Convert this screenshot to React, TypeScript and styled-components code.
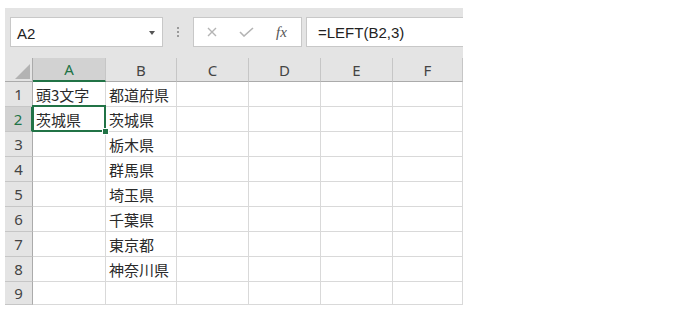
import { Fragment } from "react";
import styled, { createGlobalStyle } from "styled-components";

const GlobalStyle = createGlobalStyle`
  body {
    margin: 0;
    background: #ffffff;
    font-family: "Liberation Sans", Arial, sans-serif;
  }
`;

const Sheet = styled.div`
  margin: 8px 0 0 5px;
  width: 458px;
  background: #e4e4e4;
`;

const FormulaBar = styled.div`
  display: flex;
  align-items: stretch;
  height: 30px;
  padding: 9px 0 11px 5px;
`;

const NameBox = styled.div`
  box-sizing: border-box;
  width: 153px;
  display: flex;
  align-items: center;
  justify-content: space-between;
  padding: 2px 7px 0 6px;
  background: #fff;
  border: 1px solid #c8c8c8;
  font-size: 15px;
  color: #222;
`;

const DropArrow = styled.span`
  width: 0;
  height: 0;
  border-left: 3px solid transparent;
  border-right: 3px solid transparent;
  border-top: 4px solid #555;
`;

const Grip = styled.div`
  width: 30px;
  display: flex;
  flex-direction: column;
  align-items: center;
  justify-content: center;
  gap: 2px;

  span {
    width: 2px;
    height: 2px;
    background: #9a9a9a;
  }
`;

const IconBox = styled.div`
  box-sizing: border-box;
  width: 109px;
  margin-right: 4px;
  display: flex;
  align-items: center;
  padding-left: 13px;
  gap: 22px;
  background: #fff;
  border: 1px solid #c8c8c8;
`;

const Fx = styled.span`
  font-family: "Liberation Serif", serif;
  font-style: italic;
  font-size: 15px;
  color: #555;
`;

const FormulaInput = styled.div`
  box-sizing: border-box;
  flex: 1;
  display: flex;
  align-items: center;
  padding: 1px 0 0 11px;
  background: #fff;
  border: 1px solid #c8c8c8;
  border-right: none;
  font-size: 15px;
  color: #222;
`;

const Grid = styled.div`
  display: grid;
  grid-template-columns: 28px 73px 71px 72px 72px 72px 70px;
  grid-template-rows: 24px repeat(8, 25px) 23px;
  background: #fff;
`;

const Corner = styled.div`
  box-sizing: border-box;
  display: flex;
  align-items: flex-end;
  justify-content: flex-end;
  padding: 0 2px 2px 0;
  background: #e4e4e4;
  border-right: 1px solid #ababab;
  border-bottom: 1px solid #ababab;
`;

const ColHeader = styled.div<{ $active?: boolean }>`
  box-sizing: border-box;
  display: flex;
  align-items: center;
  justify-content: center;
  font-family: "Noto Sans", "Liberation Sans", sans-serif;
  font-size: 15px;
  color: ${(p) => (p.$active ? "#217346" : "#444")};
  background: ${(p) => (p.$active ? "#d2d2d2" : "#e4e4e4")};
  border-right: 1px solid #c6c6c6;
  border-bottom: ${(p) => (p.$active ? "2px solid #217346" : "1px solid #ababab")};
`;

const RowHeader = styled.div<{ $active?: boolean }>`
  box-sizing: border-box;
  display: flex;
  align-items: center;
  justify-content: center;
  font-family: "Noto Sans", "Liberation Sans", sans-serif;
  font-size: 15px;
  color: ${(p) => (p.$active ? "#217346" : "#444")};
  background: ${(p) => (p.$active ? "#d2d2d2" : "#e4e4e4")};
  border-bottom: 1px solid #c6c6c6;
  border-right: ${(p) => (p.$active ? "2px solid #217346" : "1px solid #ababab")};
`;

const Cell = styled.div<{ $selected?: boolean }>`
  position: relative;
  box-sizing: border-box;
  display: flex;
  align-items: center;
  padding: 0 0 0 3px;
  font-family: "Noto Sans CJK JP", "Noto Sans", sans-serif;
  font-size: 15px;
  color: #2a2a2a;
  white-space: nowrap;
  border-right: 1px solid #d9d9d9;
  border-bottom: 1px solid #d9d9d9;

  ${(p) =>
    p.$selected &&
    `
    &::before {
      content: "";
      position: absolute;
      top: -2px;
      left: -1px;
      right: -1px;
      bottom: -1px;
      border: 2px solid #217346;
      z-index: 1;
    }
    &::after {
      content: "";
      position: absolute;
      right: -4px;
      bottom: -4px;
      width: 5px;
      height: 5px;
      background: #217346;
      border: 1px solid #fff;
      z-index: 2;
    }
  `}
`;

const columns = ["A", "B", "C", "D", "E", "F"];

const data: string[][] = [
  ["頭3文字", "都道府県"],
  ["茨城県", "茨城県"],
  ["", "栃木県"],
  ["", "群馬県"],
  ["", "埼玉県"],
  ["", "千葉県"],
  ["", "東京都"],
  ["", "神奈川県"],
  ["", ""],
];

function App() {
  return (
    <>
      <GlobalStyle />
      <Sheet>
        <FormulaBar>
          <NameBox>
            A2
            <DropArrow />
          </NameBox>
          <Grip>
            <span />
            <span />
            <span />
          </Grip>
          <IconBox>
            <svg width="10" height="10" viewBox="0 0 10 10">
              <path d="M1 1 L9 9 M9 1 L1 9" stroke="#b4b4b4" strokeWidth="1.4" fill="none" />
            </svg>
            <svg width="15" height="10" viewBox="0 0 15 10">
              <path d="M1 5 L5 9 L14 1" stroke="#b4b4b4" strokeWidth="1.6" fill="none" />
            </svg>
            <Fx>fx</Fx>
          </IconBox>
          <FormulaInput>=LEFT(B2,3)</FormulaInput>
        </FormulaBar>
        <Grid>
          <Corner>
            <svg width="15" height="15" viewBox="0 0 15 15">
              <polygon points="15,0 15,15 0,15" fill="#b3b3b3" />
            </svg>
          </Corner>
          {columns.map((c) => (
            <ColHeader key={c} $active={c === "A"}>
              {c}
            </ColHeader>
          ))}
          {data.map((row, r) => (
            <Fragment key={r}>
              <RowHeader $active={r === 1}>{r + 1}</RowHeader>
              {columns.map((c, i) => (
                <Cell key={c} $selected={r === 1 && i === 0}>
                  {row[i] ?? ""}
                </Cell>
              ))}
            </Fragment>
          ))}
        </Grid>
      </Sheet>
    </>
  );
}

export default App;
